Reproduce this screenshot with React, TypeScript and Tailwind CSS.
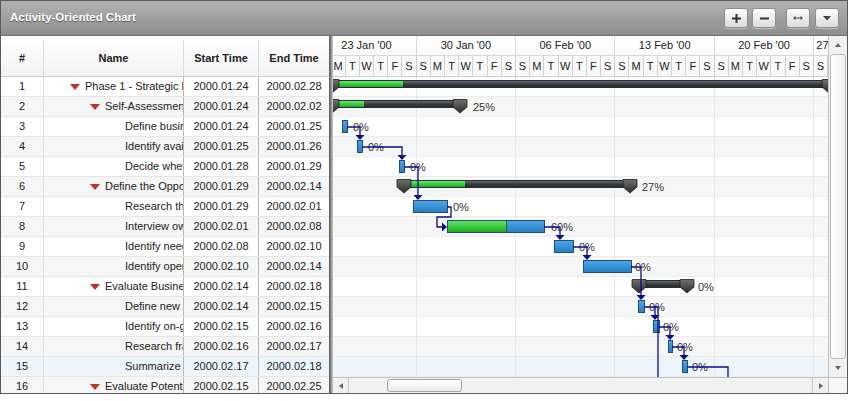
import React from "react";

type R = { name: string; level: number; group: boolean; s: string; e: string };

const ROWS: R[] = [
  { name: "Phase 1 - Strategic Plan", level: 0, group: true, s: "2000.01.24", e: "2000.02.28" },
  { name: "Self-Assessment", level: 1, group: true, s: "2000.01.24", e: "2000.02.02" },
  { name: "Define business vision", level: 2, group: false, s: "2000.01.24", e: "2000.01.25" },
  { name: "Identify available skills, information and support", level: 2, group: false, s: "2000.01.25", e: "2000.01.26" },
  { name: "Decide whether to proceed", level: 2, group: false, s: "2000.01.28", e: "2000.01.29" },
  { name: "Define the Opportunity", level: 1, group: true, s: "2000.01.29", e: "2000.02.14" },
  { name: "Research the market and competition", level: 2, group: false, s: "2000.01.29", e: "2000.02.01" },
  { name: "Interview owners of similar businesses", level: 2, group: false, s: "2000.02.01", e: "2000.02.08" },
  { name: "Identify needs for supplies", level: 2, group: false, s: "2000.02.08", e: "2000.02.10" },
  { name: "Identify operating cost elements", level: 2, group: false, s: "2000.02.10", e: "2000.02.14" },
  { name: "Evaluate Business Approach", level: 1, group: true, s: "2000.02.14", e: "2000.02.18" },
  { name: "Define new entity requirements", level: 2, group: false, s: "2000.02.14", e: "2000.02.15" },
  { name: "Identify on-going business purchase opportunities", level: 2, group: false, s: "2000.02.15", e: "2000.02.16" },
  { name: "Research franchise possibilities", level: 2, group: false, s: "2000.02.16", e: "2000.02.17" },
  { name: "Summarize business approach", level: 2, group: false, s: "2000.02.17", e: "2000.02.18" },
  { name: "Evaluate Potential Risks and Rewards", level: 1, group: true, s: "2000.02.15", e: "2000.02.25" },
];

const WEEKS = ["23 Jan '00", "30 Jan '00", "06 Feb '00", "13 Feb '00", "20 Feb '00", "27 Feb '00"];
const DAYS = ["S", "M", "T", "W", "T", "F", "S"];

const SUMS = [
  { row: 1, s: 332, e: 829, p: 403, label: "", lx: 0 },
  { row: 2, s: 332, e: 460, p: 364, label: "25%", lx: 473 },
  { row: 6, s: 404, e: 630, p: 465, label: "27%", lx: 642 },
  { row: 11, s: 639, e: 687, p: 639, label: "0%", lx: 698 },
];

const TASKS = [
  { row: 3, s: 342, e: 347, p: 0, label: "0%", lx: 353 },
  { row: 4, s: 357, e: 362, p: 0, label: "0%", lx: 368 },
  { row: 5, s: 399, e: 404, p: 0, label: "0%", lx: 410 },
  { row: 7, s: 413, e: 447, p: 0, label: "0%", lx: 453 },
  { row: 8, s: 447, e: 544, p: 506, label: "60%", lx: 551 },
  { row: 9, s: 554, e: 573, p: 0, label: "0%", lx: 579 },
  { row: 10, s: 583, e: 631, p: 0, label: "0%", lx: 635 },
  { row: 12, s: 638, e: 644, p: 0, label: "0%", lx: 649 },
  { row: 13, s: 653, e: 659, p: 0, label: "0%", lx: 663 },
  { row: 14, s: 668, e: 672, p: 0, label: "0%", lx: 677 },
  { row: 15, s: 682, e: 687, p: 0, label: "0%", lx: 692 },
];

const LINKS = [
  "M347 127 H360 V136",
  "M362 147 H402 V156",
  "M404 167 H418 V196",
  "M447 207 H451 V217 H437 V227 H443",
  "M544 227 H560 V236",
  "M573 247 H587 V256",
  "M631 267 H641 V296",
  "M644 307 H655 V316",
  "M655 307 H658 V380",
  "M659 327 H670 V336",
  "M672 347 H684 V356",
  "M687 367 H728 V380",
];
const DOWN_ARROWS: [number, number][] = [
  [360, 140], [402, 160], [418, 200], [560, 240], [587, 260], [641, 300], [655, 320], [670, 340], [684, 360],
];

const CX = 333;
const BY = 77;

function rowBg(i: number) {
  if (i === 14) return "bg-[#edf6fd]";
  return i % 2 === 1 ? "bg-[#f6f6f6]" : "bg-white";
}

function TitleButton({ children, className = "" }: { children: React.ReactNode; className?: string }) {
  return (
    <div
      className={`w-[24px] h-[20px] rounded-[3px] border border-[#8c8c8c] bg-linear-to-b from-[#ffffff] to-[#dcdcdc] flex items-center justify-center shadow-[0_1px_0_rgba(255,255,255,0.4)] ${className}`}
    >
      {children}
    </div>
  );
}

function Marker({ c, t }: { c: number; t: number }) {
  return (
    <polygon
      points={`${c - 7},${t + 2.5} ${c + 7},${t + 2.5} ${c + 7},${t + 10} ${c},${t + 16} ${c - 7},${t + 10}`}
      fill="url(#mk)"
      stroke="#1e1e1e"
      strokeWidth="0.8"
    />
  );
}

export default function App() {
  return (
    <div className="w-[848px] h-[394px] border border-[#5b5b5b] flex flex-col bg-white overflow-hidden font-['Liberation_Sans',Arial,sans-serif] text-[11px] text-[#222]">
      {/* Title bar */}
      <div className="h-[35px] shrink-0 flex items-center pl-[9px] pr-[8px] bg-linear-to-b from-[#b2b2b2] to-[#8e8e8e] border-b border-[#707070]">
        <div className="text-white font-bold text-[11.5px] [text-shadow:0_1px_1px_rgba(0,0,0,0.45)]">
          Activity-Oriented Chart
        </div>
        <div className="flex-1" />
        <TitleButton>
          <svg width="9" height="9" viewBox="0 0 9 9">
            <rect x="3.5" y="0" width="2" height="9" fill="#333" />
            <rect x="0" y="3.5" width="9" height="2" fill="#333" />
          </svg>
        </TitleButton>
        <TitleButton className="ml-[4px]">
          <svg width="9" height="9" viewBox="0 0 9 9">
            <rect x="0" y="3.5" width="9" height="2" fill="#333" />
          </svg>
        </TitleButton>
        <TitleButton className="ml-[10px]">
          <svg width="10" height="6" viewBox="0 0 10 6">
            <path d="M1.5 3 H8.5" stroke="#555" strokeWidth="1" />
            <path d="M0 3 L2.5 0.8 L2.5 5.2 Z" fill="#555" />
            <path d="M10 3 L7.5 0.8 L7.5 5.2 Z" fill="#555" />
          </svg>
        </TitleButton>
        <TitleButton className="ml-[5px]">
          <svg width="8" height="5" viewBox="0 0 8 5">
            <path d="M0 0 H8 L4 4.5 Z" fill="#444" />
          </svg>
        </TitleButton>
      </div>

      {/* Body */}
      <div className="flex-1 flex min-h-0">
        {/* Grid */}
        <div className="w-[328px] shrink-0 flex flex-col overflow-hidden">
          <div className="h-[41px] shrink-0 flex pt-[4px] border-b border-[#cfcfcf] bg-linear-to-b from-[#ffffff] to-[#f3f3f3] font-bold">
            <div className="w-[43px] border-r border-[#dcdcdc] flex items-center justify-center">#</div>
            <div className="w-[140px] border-r border-[#dcdcdc] flex items-center justify-center">Name</div>
            <div className="w-[75px] border-r border-[#dcdcdc] flex items-center justify-center">Start Time</div>
            <div className="flex-1 flex items-center justify-center">End Time</div>
          </div>
          <div className="flex flex-col">
            {ROWS.map((r, i) => (
              <div key={i} className={`h-[20px] shrink-0 flex border-b border-[#e6e6e6] ${rowBg(i)}`}>
                <div className="w-[43px] border-r border-[#e2e2e2] flex items-center justify-center">{i + 1}</div>
                <div
                  className="w-[140px] border-r border-[#b9b9b9] overflow-hidden flex items-center"
                  style={{ paddingLeft: r.group ? 26 + 20 * r.level : 41 + 20 * r.level }}
                >
                  {r.group && (
                    <div className="w-0 h-0 border-l-[5px] border-r-[5px] border-t-[6px] border-l-transparent border-r-transparent border-t-[#c4302b] mr-[5px] shrink-0" />
                  )}
                  <span className="flex-1 min-w-0 overflow-hidden whitespace-nowrap text-clip">{r.name}</span>
                </div>
                <div className="w-[75px] border-r border-[#b9b9b9] flex items-center justify-center">{r.s}</div>
                <div className="flex-1 flex items-center justify-center">{r.e}</div>
              </div>
            ))}
          </div>
        </div>

        {/* Splitter */}
        <div className="w-[4px] shrink-0 bg-linear-to-r from-[#555555] via-[#8a8a8a] to-[#cfcfcf]" />

        {/* Chart column */}
        <div className="flex-1 flex flex-col min-w-0">
          <div className="h-[341px] flex">
            {/* Viewport */}
            <div className="w-[495px] shrink-0 flex flex-col overflow-hidden">
              {/* Timeline header */}
              <div className="h-[41px] shrink-0 flex flex-col border-b border-[#cfcfcf] bg-linear-to-b from-[#ffffff] to-[#f7f7f7] overflow-hidden">
                <div className="h-[20px] flex ml-[-15.7px] border-b border-[#d8d8d8]">
                  {WEEKS.map((w, i) => (
                    <div
                      key={i}
                      className={`w-[99.4px] shrink-0 border-r border-[#d8d8d8] flex items-center whitespace-nowrap overflow-hidden ${
                        i === WEEKS.length - 1 ? "justify-start pl-[2px]" : "justify-center"
                      }`}
                    >
                      {w}
                    </div>
                  ))}
                </div>
                <div className="flex-1 flex ml-[-15.7px]">
                  {WEEKS.map((_, wi) =>
                    DAYS.map((d, di) => (
                      <div key={`${wi}-${di}`} className="w-[14.2px] shrink-0 border-r border-[#d0d0d0] flex items-center justify-center">
                        {d}
                      </div>
                    ))
                  )}
                </div>
              </div>

              {/* Chart body */}
              <div className="relative h-[300px] overflow-hidden">
                <div className="flex flex-col">
                  {ROWS.map((_, i) => (
                    <div key={i} className={`h-[20px] shrink-0 border-b border-[#ececec] ${rowBg(i)}`} />
                  ))}
                </div>
                <div className="absolute inset-0 flex ml-[-15.7px] pointer-events-none">
                  {WEEKS.map((_, i) => (
                    <div key={i} className="w-[99.4px] h-full shrink-0 border-r border-[#e8e8e8]" />
                  ))}
                </div>

                {/* Summary bars */}
                {SUMS.map((b, i) => {
                  const top = 20 * (b.row - 1) + 3;
                  return (
                    <div
                      key={`s${i}`}
                      className="absolute h-[8px] border border-[#22303e] bg-linear-to-b from-[#6a6a6a] via-[#3d3d3d] to-[#2a2a2a] overflow-hidden"
                      style={{ left: b.s - CX, width: b.e - b.s, top }}
                    >
                      {b.p > b.s && (
                        <div
                          className="h-full bg-linear-to-b from-[#6be86b] via-[#3ccb3c] to-[#24a524]"
                          style={{ width: b.p - b.s - 1 }}
                        />
                      )}
                    </div>
                  );
                })}

                {/* Task bars */}
                {TASKS.map((b, i) => {
                  const top = 20 * (b.row - 1) + 3;
                  return (
                    <div
                      key={`t${i}`}
                      className="absolute h-[13px] border border-[#1d4e80] bg-linear-to-b from-[#4aa5e8] to-[#2680c3] flex overflow-hidden"
                      style={{ left: b.s - CX, width: b.e - b.s + 1, top }}
                    >
                      {b.p > 0 && (
                        <div
                          className="h-full border-r border-[#1f6e1f] bg-linear-to-b from-[#5fe45f] via-[#3ccb3c] to-[#27a827]"
                          style={{ width: b.p - b.s }}
                        />
                      )}
                    </div>
                  );
                })}

                {/* Summary markers */}
                <svg className="absolute inset-0" width="495" height="300" viewBox={`${CX} ${BY} 495 300`}>
                  <defs>
                    <linearGradient id="mk" x1="0" y1="0" x2="0" y2="1">
                      <stop offset="0" stopColor="#707070" />
                      <stop offset="1" stopColor="#2b2b2b" />
                    </linearGradient>
                  </defs>
                  {SUMS.map((b, i) => {
                    const t = BY + 20 * (b.row - 1);
                    return (
                      <g key={i}>
                        <Marker c={b.s} t={t} />
                        <Marker c={b.e} t={t} />
                      </g>
                    );
                  })}
                </svg>

                {/* Labels */}
                {[...SUMS, ...TASKS]
                  .filter((b) => b.label)
                  .map((b, i) => (
                    <div
                      key={`l${i}`}
                      className="absolute h-[14px] leading-[14px] text-[11px] text-[#333] whitespace-nowrap"
                      style={{ left: b.lx - CX, top: 20 * (b.row - 1) + 3 }}
                    >
                      {b.label}
                    </div>
                  ))}

                {/* Dependency links */}
                <svg className="absolute inset-0" width="495" height="300" viewBox={`${CX} ${BY} 495 300`}>
                  {LINKS.map((d, i) => (
                    <path key={i} d={d} fill="none" stroke="#0a0a96" strokeWidth="1.3" />
                  ))}
                  {DOWN_ARROWS.map(([x, y], i) => (
                    <polygon key={i} points={`${x - 4.5},${y - 5} ${x + 4.5},${y - 5} ${x},${y}`} fill="#0a0a96" />
                  ))}
                  <polygon points="442,222.5 442,231.5 447,227" fill="#0a0a96" />
                </svg>
              </div>
            </div>

            {/* Vertical scrollbar */}
            <div className="flex-1 flex flex-col bg-[#f1f1f1] border-l border-[#c2c2c2]">
              <div className="h-[18px] flex items-center justify-center">
                <div className="w-0 h-0 border-l-[3.5px] border-r-[3.5px] border-b-[4px] border-l-transparent border-r-transparent border-b-[#666]" />
              </div>
              <div className="flex-1 mx-[1px] rounded-[3px] border border-[#b8b8b8] bg-linear-to-r from-[#ffffff] to-[#f0f0f0]" />
              <div className="h-[18px] flex items-center justify-center">
                <div className="w-0 h-0 border-l-[3.5px] border-r-[3.5px] border-t-[4px] border-l-transparent border-r-transparent border-t-[#666]" />
              </div>
            </div>
          </div>

          {/* Horizontal scrollbar */}
          <div className="h-[16px] flex">
            <div className="w-[495px] shrink-0 flex bg-[#f1f1f1] border-t border-[#c2c2c2]">
              <div className="w-[16px] border-r border-[#c8c8c8] flex items-center justify-center">
                <div className="w-0 h-0 border-t-[3.5px] border-b-[3.5px] border-r-[4px] border-t-transparent border-b-transparent border-r-[#666]" />
              </div>
              <div className="w-[38px]" />
              <div className="w-[75px] my-[1px] rounded-[3px] border border-[#a8a8a8] bg-linear-to-b from-[#ffffff] to-[#ececec]" />
              <div className="flex-1" />
              <div className="w-[16px] border-l border-[#c8c8c8] flex items-center justify-center">
                <div className="w-0 h-0 border-t-[3.5px] border-b-[3.5px] border-l-[4px] border-t-transparent border-b-transparent border-l-[#666]" />
              </div>
            </div>
            <div className="flex-1 bg-[#f7f7f7] border-l border-t border-[#c2c2c2]" />
          </div>
        </div>
      </div>
    </div>
  );
}
